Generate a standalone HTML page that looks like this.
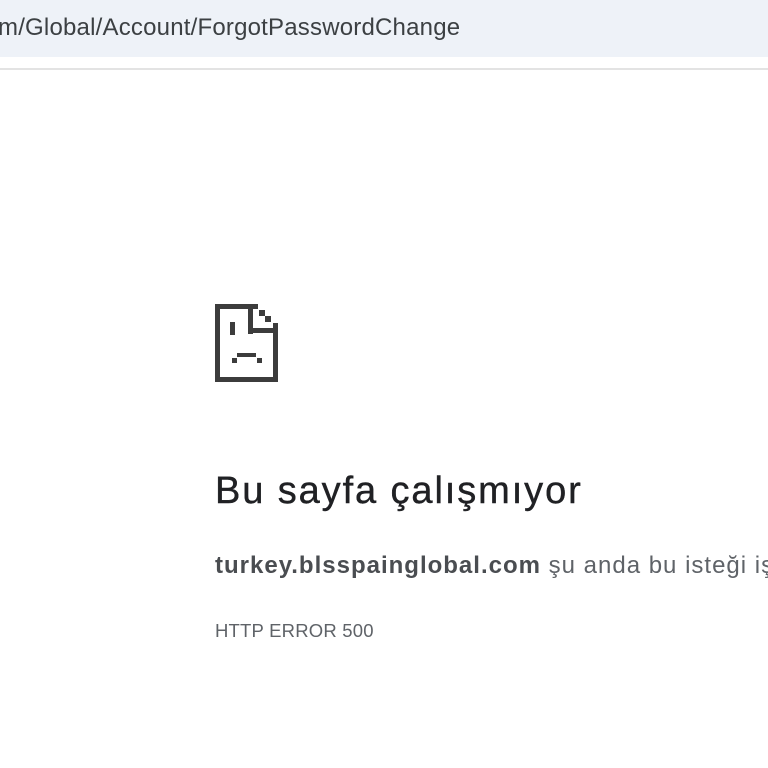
<!DOCTYPE html>
<html><head><meta charset="utf-8"><style>
html,body{margin:0;width:768px;height:768px;overflow:hidden}
body{background:#fff;font-family:"Liberation Sans",sans-serif;position:relative}
.bar{position:absolute;left:0;top:0;width:768px;height:57px;background:#eef2f8;overflow:hidden}
.url{position:absolute;left:-2px;top:14px;font-size:24px;letter-spacing:0.2px;color:#3c4043;white-space:nowrap}
.line{position:absolute;left:0;top:68px;width:768px;height:2px;background:#e3e3e3}
.clip{position:absolute;left:0;top:440px;width:768px;height:220px;overflow:hidden}
h1{position:absolute;left:215px;top:30px;margin:0;font-size:38px;letter-spacing:1.9px;font-weight:normal;color:#202124;white-space:nowrap;-webkit-text-stroke:0.4px #202124}
.p{position:absolute;left:215px;top:112px;font-size:24px;letter-spacing:1px;color:#5f6368;white-space:nowrap}
.p b{color:#4a4d51}
.e{position:absolute;left:215px;top:180px;font-size:18.5px;letter-spacing:0.2px;color:#5f6368;white-space:nowrap}
</style></head><body>
<div class="bar"><div class="url">m/Global/Account/ForgotPasswordChange</div></div>
<div class="line"></div>
<svg style="position:absolute;left:0;top:0" width="768" height="440">
<g fill="#3c3c3c">
<rect x="215" y="304" width="43" height="5"/>
<rect x="215" y="304" width="5" height="78"/>
<rect x="215" y="377" width="63" height="5"/>
<rect x="273" y="323" width="5" height="59"/>
<rect x="248" y="304" width="5" height="30"/>
<rect x="248" y="328" width="30" height="5"/>
<rect x="259" y="310" width="6" height="6"/>
<rect x="265" y="316" width="6" height="6"/>
<rect x="230" y="322" width="5" height="13"/>
<rect x="237" y="353" width="19" height="4"/>
<rect x="232" y="358" width="5" height="5"/>
<rect x="257" y="358" width="5" height="5"/>
</g></svg>
<div class="clip">
<h1>Bu sayfa çalışmıyor</h1>
<div class="p"><b>turkey.blsspainglobal.com</b> şu anda bu isteği işleyemiyor.</div>
<div class="e">HTTP ERROR 500</div>
</div>
</body></html>
